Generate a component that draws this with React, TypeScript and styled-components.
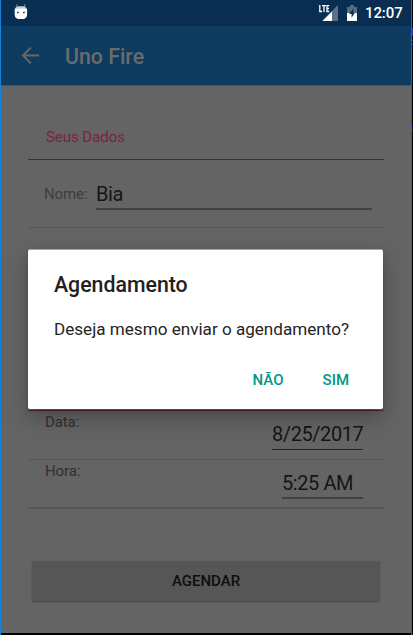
import React from "react";
import styled, { createGlobalStyle } from "styled-components";

const GlobalStyle = createGlobalStyle`
  * { box-sizing: border-box; }
  body { margin: 0; background: #000; overflow: hidden; font-family: Roboto, sans-serif; }
`;

const Window = styled.div`
  width: 413px;
  height: 635px;
  display: flex;
  background: #000;
`;

const Phone = styled.div`
  position: relative;
  width: 412px;
  height: 635px;
  border-left: 1px solid #1681d6;
  border-right: 1px solid #1b69a8;
  display: flex;
  flex-direction: column;
`;

const Edge = styled.svg`
  display: block;
  flex: none;
`;

const StatusBar = styled.header`
  height: 26px;
  flex: none;
  display: flex;
  align-items: flex-start;
  background: #0a2e52;
`;

const StatusIcon = styled.svg<{ $left: number; $top: number }>`
  display: block;
  flex: none;
  margin: ${(p) => p.$top}px 0 0 ${(p) => p.$left}px;
`;

const Clock = styled.span`
  width: 38px;
  margin: 4px 8px 0;
  color: #fff;
  font-size: 15px;
  letter-spacing: -0.1px;
  font-weight: 500;
  line-height: 19px;
  white-space: nowrap;
`;

const Spacer = styled.div`
  flex: 1;
`;

const AppBar = styled.div`
  height: 59px;
  flex: none;
  display: flex;
  align-items: center;
  padding: 2px 0 0 20px;
  background: #0d3c60;
  gap: 25px;
`;

const BackArrow = styled.svg`
  display: block;
  margin-top: -1px;
`;

const AppTitle = styled.h1`
  margin: 0;
  color: #6b6b6b;
  font-size: 21.3px;
  font-weight: 500;
  line-height: 24px;
`;

const Content = styled.main`
  flex: 1;
  display: flex;
  flex-direction: column;
  padding: 0 27px;
  background: #646464;
  border-top: 1px solid #555;
`;

const Section = styled.div`
  height: 74px;
  padding: 42px 0 0 18px;
  border-bottom: 1px solid #651d35;
  color: #7a2342;
  font-size: 15px;
  letter-spacing: -0.05px;
  line-height: 18px;
`;

const Row = styled.div<{ $height: number; $line?: number; $inset: number }>`
  height: ${(p) => p.$height}px;
  flex: none;
  display: flex;
  justify-content: space-between;
  padding-right: ${(p) => p.$inset}px;
  border-bottom: ${(p) => p.$line ?? 1}px solid #575757;
`;

const Label = styled.label<{ $top: number; $left: number; $soft?: boolean }>`
  margin: ${(p) => p.$top}px 0 0 ${(p) => p.$left}px;
  color: ${(p) => (p.$soft ? "#3e3e3e" : "#303030")};
  font-size: 15px;
  letter-spacing: -0.1px;
  line-height: 20px;
`;

const Field = styled.div<{ $width: number; $top: number; $line: number }>`
  width: ${(p) => p.$width}px;
  height: 27px;
  margin-top: ${(p) => p.$top}px;
  border-bottom: ${(p) => p.$line}px solid ${(p) => (p.$line > 1 ? "#414141" : "#262626")};
  color: #151515;
  font-size: 20px;
  letter-spacing: -0.42px;
  line-height: 22px;
  white-space: nowrap;
`;

const HiddenRows = styled.div`
  height: 183px;
  flex: none;
  border-bottom: 1px solid #5c2d3c;
`;

const SubmitButton = styled.button`
  width: 348px;
  height: 40px;
  margin: 52px 0 0 4px;
  padding: 0;
  border: 0;
  border-radius: 2px;
  background: #565656;
  box-shadow: 0 1px 2px rgba(0, 0, 0, 0.3);
  color: #0e0e0e;
  font: 500 15px/40px Roboto, sans-serif;
`;

const BottomEdge = styled.div`
  height: 2px;
  flex: none;
  background: #000;
`;

const Dialog = styled.section`
  position: absolute;
  left: 27px;
  top: 249px;
  width: 355px;
  height: 160px;
  padding: 23px 26px 0;
  border-top: 1px solid #a5a5a5;
  border-radius: 2px;
  background: #fff;
  box-shadow: 0 9px 22px rgba(0, 0, 0, 0.26), 0 2px 5px rgba(0, 0, 0, 0.14);
`;

const DialogTitle = styled.h2`
  margin: 0;
  color: #212121;
  font-size: 21.3px;
  font-weight: 500;
  line-height: 24px;
`;

const DialogText = styled.p`
  margin: 21px 0 0;
  color: #252525;
  font-size: 17.1px;
  line-height: 22px;
  white-space: nowrap;
`;

const Actions = styled.div`
  display: flex;
  justify-content: flex-end;
  gap: 39px;
  margin: 30px 8px 0 0;
`;

const Action = styled.button`
  padding: 0;
  border: 0;
  background: none;
  color: #009688;
  font: 500 15px/20px Roboto, sans-serif;
`;

function DroidIcon() {
  return (
    <StatusIcon $left={13} $top={4} width="14" height="16" viewBox="0 0 14 16">
      <path d="M2.5 0.5 3.5 3M11 0.5 10 3" stroke="#7890a7" strokeWidth="1.1" />
      <path d="M1 5C1.6 2.7 3.5 2.3 7 2.3s5 .4 5.6 2.7Z" fill="#c6d1d9" />
      <path d="M.7 4.7h12.4v5.2c0 3.6-2 5-4.2 5H5c-2.5 0-4.3-1.4-4.3-5Z" fill="#fff" />
      <path d="M3 8.5h1.8M9 8.5h1.8" stroke="#29445b" strokeWidth="1.3" />
    </StatusIcon>
  );
}

function SignalIcon() {
  return (
    <StatusIcon $left={0} $top={4} width="20" height="18" viewBox="0 0 20 18">
      <path d="M19 1v16H3Z" fill="#5b7189" />
      <path d="M13 7.5V17H3.5Z" fill="#fff" />
      <path d="M0 0h10.7v9H0Z" fill="#0a2e52" />
      <path d="M.8 1v6.5h2.3M3 1.6h4M5 1.6V8M10.2 1.6H8v5.9h2.2M8 4.5h2" fill="none" stroke="#fff" strokeWidth="1.3" />
    </StatusIcon>
  );
}

function BatteryIcon() {
  return (
    <StatusIcon $left={8} $top={5} width="10" height="16" viewBox="0 0 10 16">
      <path d="M3 0h4v2h3v7H0V2h3Z" fill="#546c84" />
      <path d="M0 8h10v8H0Z" fill="#fff" />
      <path d="M6.2 3.5 2.2 9h2.4v3.7L7.8 7.7H6.2Z" fill="#0a2e52" />
    </StatusIcon>
  );
}

export default function App() {
  return (
    <>
      <GlobalStyle />
      <Window>
        <Phone>
          <StatusBar>
            <DroidIcon />
            <Spacer />
            <SignalIcon />
            <BatteryIcon />
            <Clock>12:07</Clock>
          </StatusBar>
          <AppBar>
            <BackArrow width="19" height="18" viewBox="0 0 19 18" fill="none" stroke="#696969" strokeWidth="1.9">
              <path d="M18 8.5H2M9.8.7 2 8.5l7.8 7.8" />
            </BackArrow>
            <AppTitle>Uno Fire</AppTitle>
          </AppBar>
          <Content>
            <Section>Seus Dados</Section>
            <Row $height={68} $inset={12}>
              <Label $top={24} $left={16} $soft>Nome:</Label>
              <Field $width={276} $top={23} $line={2}>Bia</Field>
            </Row>
            <HiddenRows />
            <Row $height={49} $inset={21}>
              <Label $top={1} $left={17}>Data:</Label>
              <Field $width={91} $top={12} $line={1}>8/25/2017</Field>
            </Row>
            <Row $height={49} $line={2} $inset={21}>
              <Label $top={1} $left={17}>Hora:</Label>
              <Field $width={81} $top={12} $line={2}>5:25 AM</Field>
            </Row>
            <SubmitButton>AGENDAR</SubmitButton>
          </Content>
          <BottomEdge />
          <Dialog role="dialog">
            <DialogTitle>Agendamento</DialogTitle>
            <DialogText>Deseja mesmo enviar o agendamento?</DialogText>
            <Actions>
              <Action>NÃO</Action>
              <Action>SIM</Action>
            </Actions>
          </Dialog>
        </Phone>
        <Edge width="1" height="635" viewBox="0 0 1 635">
          <path d="M0 28h1v8H0ZM0 40h1v1H0ZM0 44h1v1H0ZM0 126h1v1H0ZM0 129h1v1H0ZM0 131h1v1H0Z" fill="#2525c8" />
        </Edge>
      </Window>
    </>
  );
}
